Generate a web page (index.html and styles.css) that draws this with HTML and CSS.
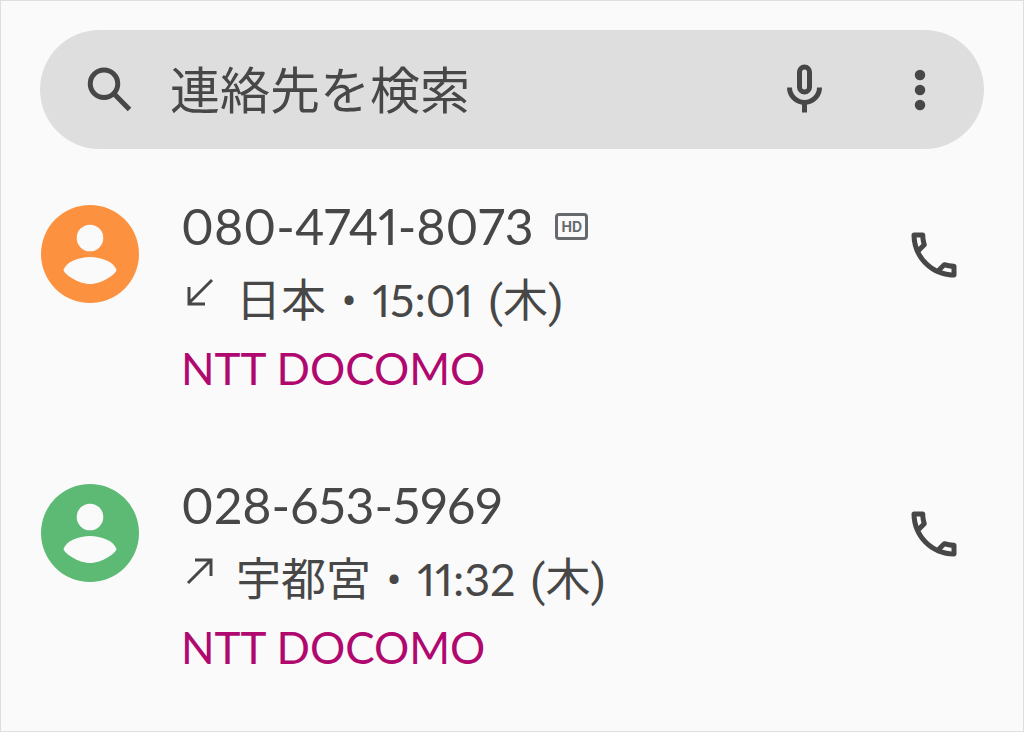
FILE: index.html
```
<!DOCTYPE html>
<html lang="ja">
<head>
    <meta charset="UTF-8">
    <meta name="viewport" content="width=device-width, initial-scale=1.0">
    <title>通話履歴</title>
    <link rel="stylesheet" href="styles.css">
</head>
<body>

    <form class="search-bar" role="search">
        <label for="search" aria-label="検索">
            <svg class="icon line" viewBox="0 0 24 24"><circle cx="9.6" cy="9.5" r="5.5"/><path d="M13.4 13.3l6.4 6.5"/></svg>
        </label>
        <input type="text" id="search" name="search" placeholder="連絡先を検索">
        <button type="button" aria-label="音声検索">
            <svg class="icon line" viewBox="0 0 24 24"><rect x="10.2" y="2.8" width="4" height="10" rx="2"/><path d="M6.2 11a6 6 0 0 0 12 0M12.2 17v4"/></svg>
        </button>
        <button type="button" aria-label="その他">
            <svg class="icon" viewBox="0 0 24 24"><circle cx="12" cy="6" r="2.1"/><circle cx="12" cy="12" r="2.1"/><circle cx="12" cy="18" r="2.1"/></svg>
        </button>
    </form>

    <ul class="calls">
        <li class="call">
            <svg class="avatar orange" viewBox="0 0 98 98"><circle cx="49" cy="49" r="49"/><circle class="person" cx="49" cy="33" r="13.3"/><path class="person" d="M22.5 65C25 57 38 52 49 52S73 57 75.5 65C75 69 61 79 49 79S23 69 22.5 65z"/></svg>
            <div class="info">
                <div class="number">080-4741-8073 <span class="hd">HD</span></div>
                <div class="meta">
                    <svg class="arrow" viewBox="0 0 30 30"><path d="M27 2L4 25M4 9v17h16"/></svg>
                    <span>日本 <span class="dot">•</span> 15:01 <span class="day">(木)</span></span>
                </div>
                <div class="carrier">NTT DOCOMO</div>
            </div>
            <button type="button" aria-label="発信">
                <svg class="icon" viewBox="0 0 24 24"><path d="M6.54 5c.06.89.21 1.76.45 2.59l-1.2 1.2c-.41-1.2-.67-2.47-.76-3.79h1.51m9.86 12.02c.85.24 1.72.39 2.6.45v1.49c-1.32-.09-2.59-.35-3.8-.75l1.2-1.19M7.5 3H4c-.55 0-1 .45-1 1 0 9.39 7.61 17 17 17 .55 0 1-.45 1-1v-3.49c0-.55-.45-1-1-1-1.24 0-2.45-.2-3.57-.57-.1-.04-.21-.05-.31-.05-.26 0-.51.1-.71.29l-2.2 2.2c-2.83-1.45-5.15-3.76-6.59-6.59l2.2-2.2c.28-.28.36-.67.25-1.02C8.7 6.45 8.5 5.25 8.5 4c0-.55-.45-1-1-1z"/></svg>
            </button>
        </li>
        <li class="call">
            <svg class="avatar green" viewBox="0 0 98 98"><circle cx="49" cy="49" r="49"/><circle class="person" cx="49" cy="33" r="13.3"/><path class="person" d="M22.5 65C25 57 38 52 49 52S73 57 75.5 65C75 69 61 79 49 79S23 69 22.5 65z"/></svg>
            <div class="info">
                <div class="number">028-653-5969</div>
                <div class="meta">
                    <svg class="arrow" viewBox="0 0 30 30"><path d="M3 26L26 3M10 3h16v16"/></svg>
                    <span>宇都宮 <span class="dot">•</span> 11:32 <span class="day">(木)</span></span>
                </div>
                <div class="carrier">NTT DOCOMO</div>
            </div>
            <button type="button" aria-label="発信">
                <svg class="icon" viewBox="0 0 24 24"><path d="M6.54 5c.06.89.21 1.76.45 2.59l-1.2 1.2c-.41-1.2-.67-2.47-.76-3.79h1.51m9.86 12.02c.85.24 1.72.39 2.6.45v1.49c-1.32-.09-2.59-.35-3.8-.75l1.2-1.19M7.5 3H4c-.55 0-1 .45-1 1 0 9.39 7.61 17 17 17 .55 0 1-.45 1-1v-3.49c0-.55-.45-1-1-1-1.24 0-2.45-.2-3.57-.57-.1-.04-.21-.05-.31-.05-.26 0-.51.1-.71.29l-2.2 2.2c-2.83-1.45-5.15-3.76-6.59-6.59l2.2-2.2c.28-.28.36-.67.25-1.02C8.7 6.45 8.5 5.25 8.5 4c0-.55-.45-1-1-1z"/></svg>
            </button>
        </li>
    </ul>

</body>
</html>
```
FILE: styles.css
```
* {
    box-sizing: border-box;
}
body {
    font-family: Lato, "Noto Sans CJK JP", sans-serif;
    font-variant-numeric: proportional-nums;
    background-color: #fafafa;
    color: #474747;
    margin: 0;
    padding: 29px 39px 0;
    min-height: 100vh;
    border: 1px solid #dedede;
}
button {
    padding: 0;
    border: none;
    background: none;
    color: inherit;
    cursor: pointer;
}
.icon {
    display: block;
    width: 60px;
    height: 60px;
    fill: currentColor;
}
.line {
    fill: none;
    stroke: currentColor;
    stroke-width: 2;
}
.search-bar {
    display: flex;
    align-items: center;
    height: 119px;
    padding: 0 34px 0 40px;
    border-radius: 60px;
    background-color: #dedede;
}
.search-bar input {
    flex: 1;
    min-width: 0;
    padding: 0 0 0 30px;
    border: none;
    outline: none;
    background: none;
    color: inherit;
    font-family: inherit;
    font-size: 50px;
}
.search-bar input::placeholder {
    color: #474747;
    opacity: 1;
}
.search-bar button + button {
    margin-left: 56px;
}
.calls {
    list-style: none;
    margin: 0;
    padding: 41px 20px 0 1px;
}
.call {
    display: flex;
    align-items: flex-start;
    margin-bottom: 72px;
}
.call:last-child {
    margin-bottom: 0;
}
.avatar {
    flex: none;
    width: 98px;
    height: 98px;
    margin-top: 15px;
}
.orange {
    fill: #fc923f;
}
.green {
    fill: #5dba75;
}
.person {
    fill: #fafafa;
}
.info {
    flex: 1;
    padding-left: 42px;
}
.number {
    display: flex;
    align-items: center;
    gap: 22px;
    font-size: 50px;
    line-height: 72px;
}
.hd {
    padding: 0 3px;
    border: 3px solid #666a6e;
    border-radius: 4px;
    color: #666a6e;
    font-family: Inter, sans-serif;
    font-size: 14px;
    font-weight: bold;
    line-height: 21px;
}
.meta {
    display: flex;
    align-items: center;
    gap: 21px;
    padding-left: 4px;
    font-size: 45px;
    line-height: 77px;
}
.dot {
    margin: 0 4px;
    font-family: Roboto, sans-serif;
    line-height: 1;
}
.day {
    margin-left: 3px;
    font-family: Roboto, "Noto Sans CJK JP", sans-serif;
    line-height: 1;
}
.arrow {
    width: 30px;
    height: 30px;
    margin-bottom: 16px;
    fill: none;
    stroke: currentColor;
    stroke-width: 3;
}
.carrier {
    color: #b0086f;
    font-size: 44px;
    line-height: 58px;
}
.call button {
    margin-top: 35px;
}
```
